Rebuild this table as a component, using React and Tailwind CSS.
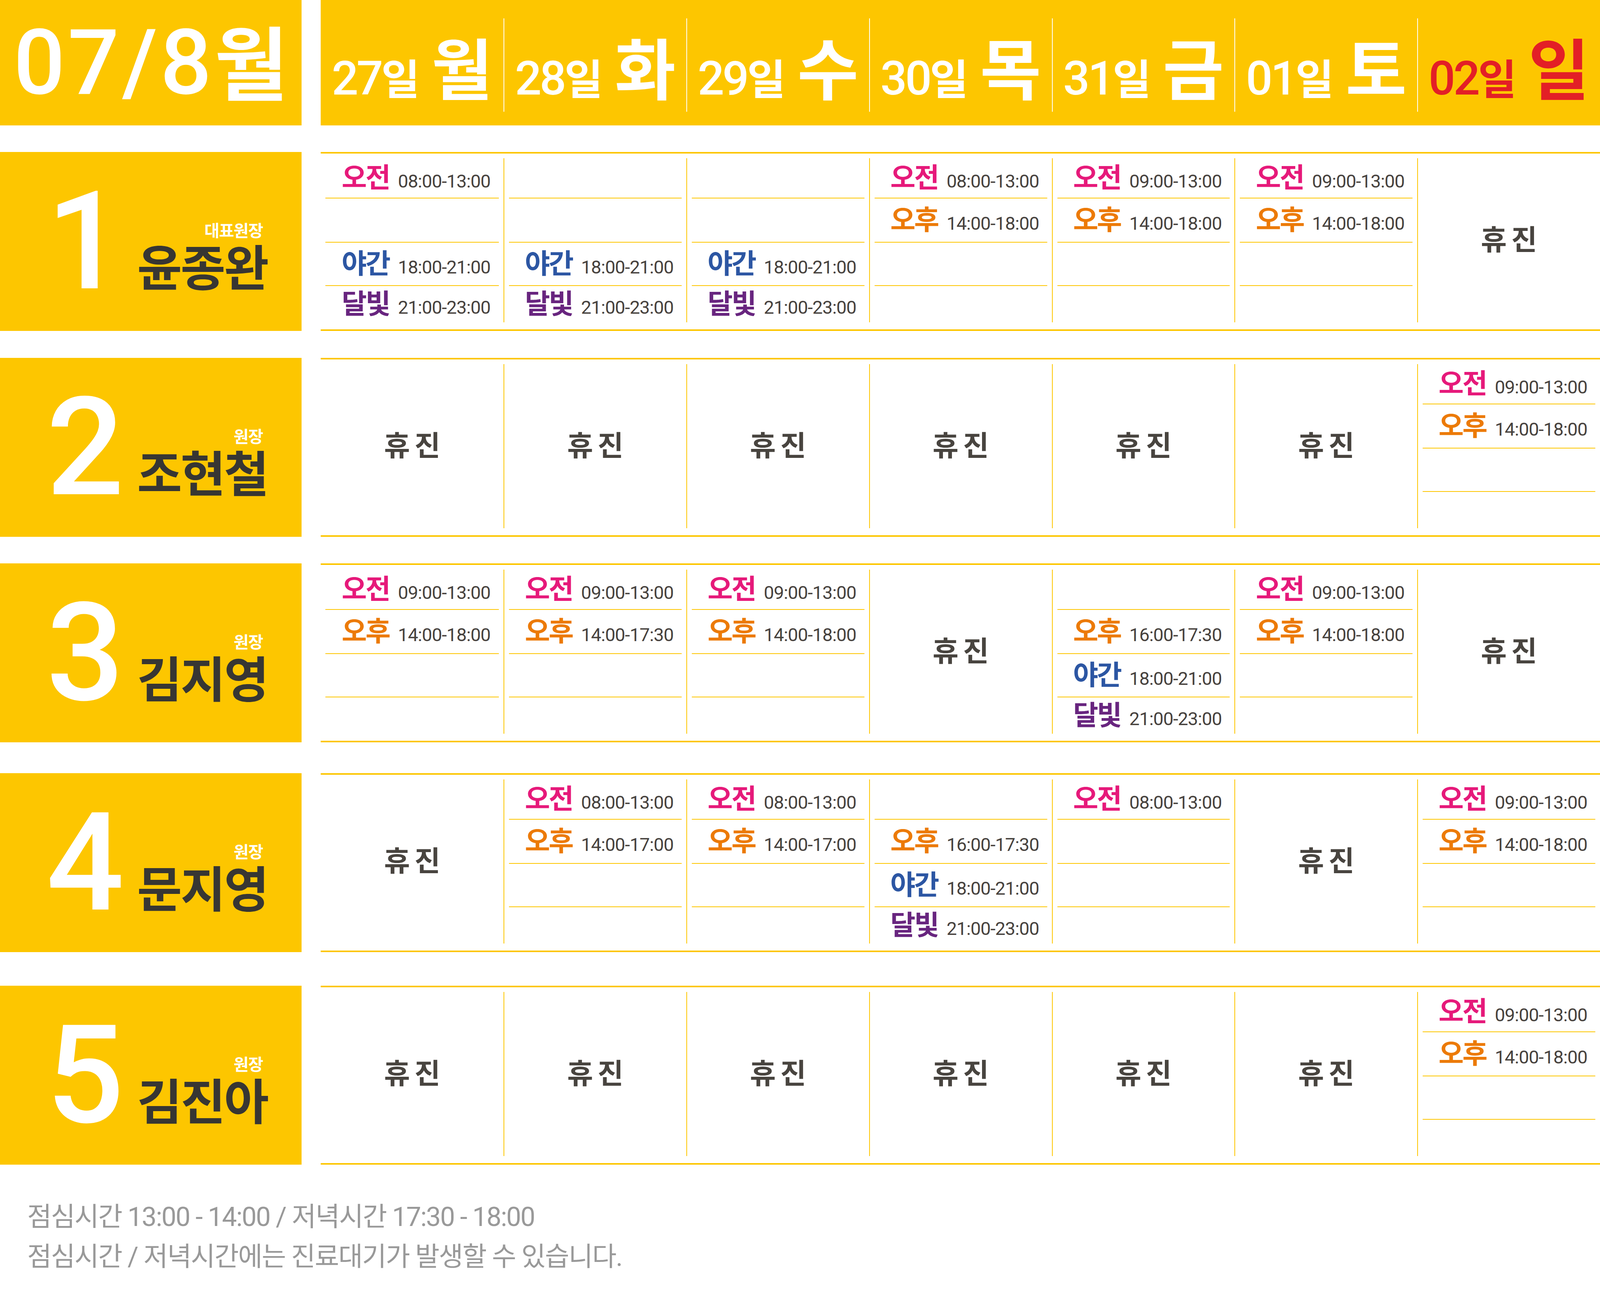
import React from 'react';

const KIND = {
    am: { label: '오전', color: 'text-[#e6197a]' },
    pm: { label: '오후', color: 'text-[#ec7a06]' },
    night: { label: '야간', color: 'text-[#2c56a3]' },
    moon: { label: '달빛', color: 'text-[#68257f]' },
};

const days = [
    { num: '27', day: '월' },
    { num: '28', day: '화' },
    { num: '29', day: '수' },
    { num: '30', day: '목' },
    { num: '31', day: '금' },
    { num: '01', day: '토' },
    { num: '02', day: '일', sunday: true },
];

const OFF = 'off';
const e = null;

const doctors = [
    {
        no: '1',
        title: '대표원장',
        name: '윤종완',
        gap: 'mt-[68px]',
        week: [
            [['am', '08:00-13:00'], e, ['night', '18:00-21:00'], ['moon', '21:00-23:00']],
            [e, e, ['night', '18:00-21:00'], ['moon', '21:00-23:00']],
            [e, e, ['night', '18:00-21:00'], ['moon', '21:00-23:00']],
            [['am', '08:00-13:00'], ['pm', '14:00-18:00'], e, e],
            [['am', '09:00-13:00'], ['pm', '14:00-18:00'], e, e],
            [['am', '09:00-13:00'], ['pm', '14:00-18:00'], e, e],
            OFF,
        ],
    },
    {
        no: '2',
        title: '원장',
        name: '조현철',
        gap: 'mt-[69px]',
        week: [OFF, OFF, OFF, OFF, OFF, OFF, [['am', '09:00-13:00'], ['pm', '14:00-18:00'], e, e]],
    },
    {
        no: '3',
        title: '원장',
        name: '김지영',
        gap: 'mt-[68px]',
        week: [
            [['am', '09:00-13:00'], ['pm', '14:00-18:00'], e, e],
            [['am', '09:00-13:00'], ['pm', '14:00-17:30'], e, e],
            [['am', '09:00-13:00'], ['pm', '14:00-18:00'], e, e],
            OFF,
            [e, ['pm', '16:00-17:30'], ['night', '18:00-21:00'], ['moon', '21:00-23:00']],
            [['am', '09:00-13:00'], ['pm', '14:00-18:00'], e, e],
            OFF,
        ],
    },
    {
        no: '4',
        title: '원장',
        name: '문지영',
        gap: 'mt-[79px]',
        week: [
            OFF,
            [['am', '08:00-13:00'], ['pm', '14:00-17:00'], e, e],
            [['am', '08:00-13:00'], ['pm', '14:00-17:00'], e, e],
            [e, ['pm', '16:00-17:30'], ['night', '18:00-21:00'], ['moon', '21:00-23:00']],
            [['am', '08:00-13:00'], e, e, e],
            OFF,
            [['am', '09:00-13:00'], ['pm', '14:00-18:00'], e, e],
        ],
    },
    {
        no: '5',
        title: '원장',
        name: '김진아',
        gap: 'mt-[86px]',
        week: [OFF, OFF, OFF, OFF, OFF, OFF, [['am', '09:00-13:00'], ['pm', '14:00-18:00'], e, e]],
    },
];

// sub-row heights inside a day cell
const SLOT_H = ['h-[103px]', 'h-[113px]', 'h-[111px]', 'flex-1'];

const Slot = ({ slot, index }) => (
    <div className={`${SLOT_H[index]} ${index < 3 ? 'border-b-2 border-[#fdc600]' : ''} flex items-center justify-center pl-[20px]`}>
        {slot && (
            <div className="flex items-baseline gap-[22px] whitespace-nowrap">
                <span className={`text-[70px] font-bold leading-none tracking-[-0.05em] ${KIND[slot[0]].color}`}>
                    {KIND[slot[0]].label}
                </span>
                <span className="text-[47px] leading-none tracking-[-0.02em] text-[#47423e]">{slot[1]}</span>
            </div>
        )}
    </div>
);

const DayCell = ({ cell, first }) => {
    const edge = first ? '' : 'border-l-2 border-[#fdc600]';
    if (cell === OFF) {
        return (
            <div className={`min-w-0 flex items-center justify-center ${edge}`}>
                <span className="text-[72px] font-bold leading-none tracking-[0.16em] mr-[-0.16em] text-[#48443f]">휴진</span>
            </div>
        );
    }
    return (
        <div className={`min-w-0 flex flex-col ${edge}`}>
            <div className="flex-1 flex flex-col mx-[12px]">
                {cell.map((slot, i) => (
                    <Slot key={i} slot={slot} index={i} />
                ))}
            </div>
        </div>
    );
};

const DoctorRow = ({ doc }) => (
    <div className={`flex h-[458px] ${doc.gap}`}>
        {/* doctor box */}
        <div className="w-[18.85%] shrink-0 bg-[#fdc600] flex items-center">
            <span className="ml-[15.3%] w-[200px] shrink-0 text-center text-[350px] font-medium leading-none text-white">{doc.no}</span>
            <div className="ml-auto mr-[11.3%] mt-[86px] flex flex-col items-end">
                <span className="text-[42px] font-bold leading-none tracking-[-0.03em] text-white pr-[12px] mb-[14px]">{doc.title}</span>
                <span className="text-[125px] font-bold leading-none tracking-[-0.03em] text-[#373633] whitespace-nowrap">{doc.name}</span>
            </div>
        </div>
        {/* week */}
        <div className="flex-1 min-w-0 ml-[1.2%] border-y-4 border-[#fdc600] grid grid-cols-7 pt-[12px] pb-[18px]">
            {doc.week.map((cell, i) => (
                <DayCell key={i} cell={cell} first={i === 0} />
            ))}
        </div>
    </div>
);

const App = () => {
    return (
        <div className="w-full h-[3330px] bg-white font-['Roboto','Noto_Sans_CJK_KR',sans-serif] overflow-hidden">
            {/* header */}
            <div className="flex h-[321px]">
                <div className="w-[18.85%] shrink-0 bg-[#fdc600] flex items-center justify-center text-white">
                    <div className="flex items-baseline whitespace-nowrap">
                        <span className="text-[232px] font-medium leading-none tracking-[0.03em]">07/8</span>
                        <span className="text-[205px] font-bold leading-none">월</span>
                    </div>
                </div>
                <div className="flex-1 min-w-0 ml-[1.2%] bg-[#fdc600] grid grid-cols-7 pt-[47px] pb-[35px]">
                    {days.map((d, i) => (
                        <div
                            key={d.num}
                            className={`min-w-0 flex items-center justify-center pt-[34px] ${i === 0 ? '' : 'border-l-2 border-white'} ${d.sunday ? 'text-[#e31f26]' : 'text-white'}`}
                        >
                            <div className="flex items-baseline whitespace-nowrap">
                                <span className="text-[120px] font-medium leading-none tracking-[-0.04em]">{d.num}</span>
                                <span className="text-[107px] font-bold leading-none">일</span>
                                <span className="ml-[30px] text-[170px] font-bold leading-none">{d.day}</span>
                            </div>
                        </div>
                    ))}
                </div>
            </div>

            {doctors.map((doc) => (
                <DoctorRow key={doc.no} doc={doc} />
            ))}

            {/* footnote */}
            <div className="mt-[83px] pl-[1.7%] text-[68px] leading-[102px] tracking-[-0.03em] text-[#999999]">
                <p>점심시간 13:00 - 14:00 / 저녁시간 17:30 - 18:00</p>
                <p>점심시간 / 저녁시간에는 진료대기가 발생할 수 있습니다.</p>
            </div>
        </div>
    );
};

export default App;
